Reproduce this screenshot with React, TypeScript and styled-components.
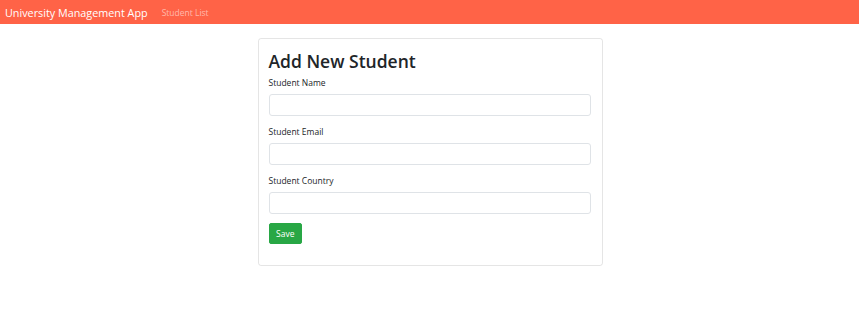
import React from 'react';
import styled, { createGlobalStyle } from 'styled-components';

const GlobalStyle = createGlobalStyle`
	* {
		box-sizing: border-box;
	}

	body {
		margin: 0;
		background: #fff;
		font-family: 'Open Sans', 'Noto Sans', sans-serif;
		color: #212529;
	}
`;

const NavBar = styled.nav`
	height: 24px;
	background: #ff6347;
	display: flex;
	align-items: center;
	padding: 0 5px;
	gap: 14px;
`;

const Brand = styled.a`
	color: #fff;
	font-size: 10.8px;
	text-decoration: none;
`;

const NavLink = styled.a`
	color: rgba(255, 255, 255, 0.55);
	font-size: 8.5px;
	text-decoration: none;
`;

const Main = styled.main`
	display: flex;
	justify-content: center;
	padding: 14px 0 0 1px;
`;

const Card = styled.div`
	width: 345px;
	border: 1px solid rgba(0, 0, 0, 0.1);
	border-radius: 3px;
	padding: 11px 11px 21px 10px;
`;

const Title = styled.h2`
	margin: 0 0 4px;
	font-size: 17.5px;
	font-weight: 600;
	line-height: 22px;
`;

const FormGroup = styled.div`
	margin-bottom: 9px;
`;

const Label = styled.label`
	display: block;
	font-size: 8.5px;
	line-height: 14px;
	margin-bottom: 4px;
	color: #212529;
`;

const Input = styled.input`
	display: block;
	width: 100%;
	height: 22px;
	border: 1px solid #dfe3e7;
	border-radius: 3px;
	padding: 0 7px;
	font-family: inherit;
	font-size: 9px;
	outline: none;
`;

const SaveButton = styled.button`
	display: block;
	height: 21px;
	padding: 0 6.5px;
	background: #28a745;
	border: 1px solid #28a745;
	border-radius: 2px;
	color: #fff;
	font-family: inherit;
	font-size: 8.5px;
	cursor: pointer;
`;

const fields = ['Student Name', 'Student Email', 'Student Country'];

export default function App() {
	return (
		<>
			<GlobalStyle />
			<NavBar>
				<Brand href="#">University Management App</Brand>
				<NavLink href="#">Student List</NavLink>
			</NavBar>
			<Main>
				<Card>
					<Title>Add New Student</Title>
					{fields.map((field) => (
						<FormGroup key={field}>
							<Label>{field}</Label>
							<Input type="text" />
						</FormGroup>
					))}
					<SaveButton>Save</SaveButton>
				</Card>
			</Main>
		</>
	);
}
